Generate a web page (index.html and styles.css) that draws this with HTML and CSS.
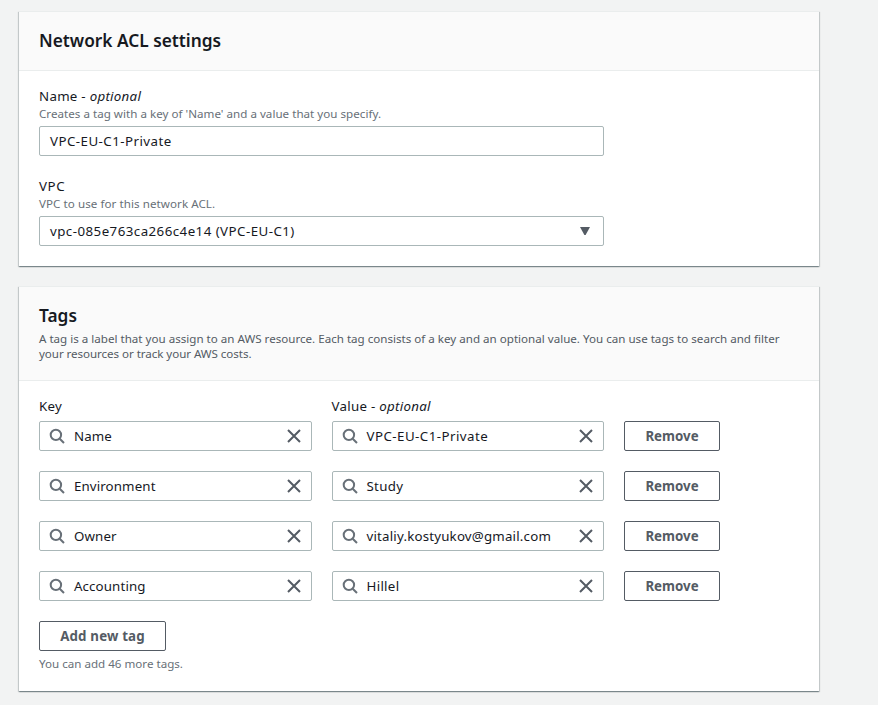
FILE: index.html
```html
<!DOCTYPE html>
<html lang="en">
<head>
<meta charset="utf-8">
<title>Network ACL settings</title>
<link rel="stylesheet" href="styles.css">
</head>
<body>
<svg class="sprite" width="0" height="0" aria-hidden="true">
  <symbol id="search" viewBox="0 0 16 16"><circle cx="6.9" cy="6.9" r="5.2"/><path d="M10.7 10.7 15 15"/></symbol>
  <symbol id="close" viewBox="0 0 16 16"><path d="M2 2l12 12M14 2 2 14"/></symbol>
</svg>
<main class="page">
  <section class="panel">
    <header class="panel-head"><h2 class="t-acl">Network ACL settings</h2></header>
    <div class="panel-body">
      <div class="field">
        <div class="label"><span class="t-name">Name - <em>optional</em></span></div>
        <div class="hint"><span class="t-creates">Creates a tag with a key of 'Name' and a value that you specify.</span></div>
        <div class="input"><span class="value t-private">VPC-EU-C1-Private</span></div>
      </div>
      <div class="field">
        <div class="label"><span class="t-vpc">VPC</span></div>
        <div class="hint"><span class="t-use">VPC to use for this network ACL.</span></div>
        <div class="input"><span class="value t-id">vpc-085e763ca266c4e14 (VPC-EU-C1)</span><svg class="caret" viewBox="0 0 10 8"><path d="M0 0h10L5.6 8H4.4z"/></svg></div>
      </div>
    </div>
  </section>

  <section class="panel">
    <header class="panel-head tags-head">
      <h2 class="t-tags">Tags</h2>
      <p class="desc"><span class="t-d1">A tag is a label that you assign to an AWS resource. Each tag consists of a key and an optional value. You can use tags to search and filter</span><br><span class="t-d2">your resources or track your AWS costs.</span></p>
    </header>
    <div class="panel-body tags-body">
      <div class="row labels"><div class="label"><span class="t-key">Key</span></div><div class="label"><span class="t-name">Value - <em>optional</em></span></div></div>
      <div class="row">
        <div class="input"><svg class="search"><use href="#search"/></svg><span class="value">Name</span><svg class="close"><use href="#close"/></svg></div>
        <div class="input"><svg class="search"><use href="#search"/></svg><span class="value t-private">VPC-EU-C1-Private</span><svg class="close"><use href="#close"/></svg></div>
        <button class="button">Remove</button>
      </div>
      <div class="row">
        <div class="input"><svg class="search"><use href="#search"/></svg><span class="value">Environment</span><svg class="close"><use href="#close"/></svg></div>
        <div class="input"><svg class="search"><use href="#search"/></svg><span class="value t-key">Study</span><svg class="close"><use href="#close"/></svg></div>
        <button class="button">Remove</button>
      </div>
      <div class="row">
        <div class="input"><svg class="search"><use href="#search"/></svg><span class="value">Owner</span><svg class="close"><use href="#close"/></svg></div>
        <div class="input"><svg class="search"><use href="#search"/></svg><span class="value t-mail">vitaliy.kostyukov@gmail.com</span><svg class="close"><use href="#close"/></svg></div>
        <button class="button">Remove</button>
      </div>
      <div class="row">
        <div class="input"><svg class="search"><use href="#search"/></svg><span class="value">Accounting</span><svg class="close"><use href="#close"/></svg></div>
        <div class="input"><svg class="search"><use href="#search"/></svg><span class="value t-key">Hillel</span><svg class="close"><use href="#close"/></svg></div>
        <button class="button">Remove</button>
      </div>
      <button class="button add">Add new tag</button>
      <div class="hint more"><span class="t-more">You can add 46 more tags.</span></div>
    </div>
  </section>
</main>
</body>
</html>
```
FILE: styles.css
```css
* { box-sizing: border-box; }
body {
  margin: 0;
  background: #f2f3f3;
  color: #16191f;
  font: 13.3px/20px "Noto Sans", "Open Sans", sans-serif;
}
.sprite { display: block; }
.page {
  display: flex;
  flex-direction: column;
  gap: 20px;
  width: 800px;
  margin: 11px 0 0 19px;
  padding-bottom: 14px;
}
.panel {
  background: #fff;
  border-top: 1px solid #eaeded;
  box-shadow: 0 1px 1px 0 rgba(0,28,36,.3), 1px 1px 1px 0 rgba(0,28,36,.15), -1px 1px 1px 0 rgba(0,28,36,.15);
}
.panel-head {
  height: 59px;
  padding: 18px 20px 0;
  background: #fafafa;
  border-bottom: 1px solid #eaeded;
}
.tags-head { height: 94px; }
h2 { margin: 0; font-size: 17.3px; line-height: 22px; font-weight: 600; white-space: nowrap; }
.desc { margin: 4px 0 0; font-size: 11.6px; line-height: 15px; color: #545b64; white-space: nowrap; }
.panel-body { display: flex; flex-direction: column; gap: 20px; padding: 15px 20px 20px; }
.label { height: 20px; white-space: nowrap; }
.hint { height: 15px; font-size: 11.6px; line-height: 15px; color: #687078; white-space: nowrap; }
.input {
  display: flex;
  align-items: center;
  width: 565px;
  height: 30px;
  padding: 0 10px;
  background: #fff;
  border: 1px solid #aab7b8;
  border-radius: 2px;
}
.field .input { margin-top: 5px; }
.value { white-space: nowrap; letter-spacing: .12px; }
.caret { width: 10px; height: 8px; margin-left: auto; margin-right: 3px; fill: #545b64; }
.row { display: grid; grid-template-columns: 272.5px 272.5px 96px; gap: 20px; }
.row .input { width: auto; }
.labels { margin-bottom: -15px; }
.search, .close { flex: none; width: 16px; height: 16px; fill: none; stroke: #687078; stroke-width: 2; }
.search { margin-left: -1px; margin-right: 9px; }
.close { margin-left: auto; margin-right: -1px; stroke: #545b64; }
.button {
  height: 30px;
  padding: 0;
  border: 1px solid #545b64;
  border-radius: 2px;
  background: #fff;
  color: #545b64;
  font: 700 13.3px/20px "Noto Sans", "Open Sans", sans-serif;
}
.add { width: 127px; letter-spacing: .17px; }
.more { margin-top: -15px; }

/* Tracking */
.t-name { letter-spacing: .28px; }
.t-key { letter-spacing: .3px; }
.t-private, .t-id { letter-spacing: .46px; }
.t-vpc { letter-spacing: .6px; }
.t-mail { letter-spacing: .19px; }
.t-creates { letter-spacing: .02px; }
.t-use { letter-spacing: .06px; }
.t-d1 { letter-spacing: 0; }
.t-d2 { letter-spacing: -.06px; }
```
